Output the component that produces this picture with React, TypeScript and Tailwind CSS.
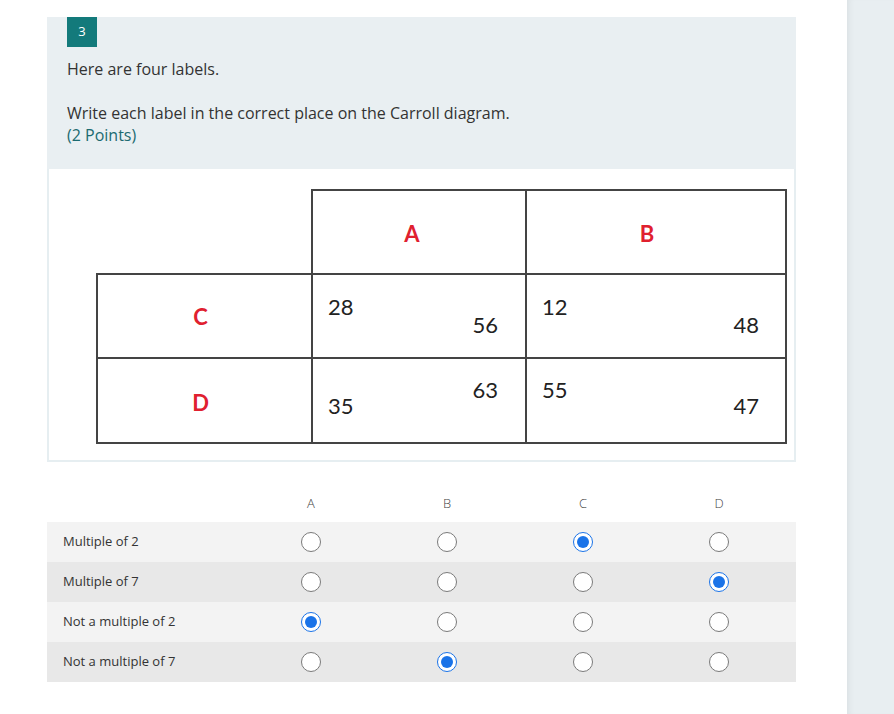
import React from "react";

const rows = [
  { label: "Multiple of 2", pick: 2 },
  { label: "Multiple of 7", pick: 3 },
  { label: "Not a multiple of 2", pick: 0 },
  { label: "Not a multiple of 7", pick: 1 },
];

const cols = ["A", "B", "C", "D"];

function Radio({ checked }: { checked: boolean }) {
  if (checked) {
    return (
      <span className="flex h-5 w-5 items-center justify-center rounded-full border border-[#1a73e8] bg-white">
        <span className="h-3 w-3 rounded-full bg-[#1a73e8]" />
      </span>
    );
  }
  return <span className="block h-5 w-5 rounded-full border border-[#7a7a7a] bg-white" />;
}

function NumCell({
  left, right, leftTop, rightTop, pr,
}: {
  left: string;
  right: string;
  leftTop: string;
  rightTop: string;
  pr: string;
}) {
  return (
    <td className="border-2 border-[#444] p-0 align-top">
      <div className={`flex h-full justify-between pl-[15px] ${pr}`}>
        <span className={leftTop}>{left}</span>
        <span className={rightTop}>{right}</span>
      </div>
    </td>
  );
}

export default function App() {
  return (
    <div
      className="flex min-h-[714px] w-full bg-white text-[#333]"
      style={{ fontFamily: "'Open Sans', 'Noto Sans', sans-serif" }}
    >
      <main className="flex-1 pt-[17px]">
        <div className="ml-[47px] w-[749px]">
          {/* Question header */}
          <div className="bg-[#e9eff2] px-5 pb-[23px]">
            <div className="flex h-[30px] w-[30px] items-center justify-center bg-[#137a7b] text-[13px] text-white">
              3
            </div>
            <div className="mt-[11px] text-[16px] leading-[22px]">
              <p>Here are four labels.</p>
              <p>&nbsp;</p>
              <p>Write each label in the correct place on the Carroll diagram.</p>
              <p className="text-[#1b6a70]">(2 Points)</p>
            </div>
          </div>

          {/* Carroll diagram picture */}
          <div className="border-x-2 border-b-2 border-[#e6eef1] bg-white pb-[16px] pl-[47px] pt-[20px]">
            <table
              className="border-collapse text-[22px] leading-none text-[#222]"
              style={{ fontFamily: "Lato, 'Liberation Sans', sans-serif" }}
            >
              <colgroup>
                <col className="w-[215px]" />
                <col className="w-[214px]" />
                <col className="w-[260px]" />
              </colgroup>
              <tbody>
                <tr className="h-[84px]">
                  <td className="p-0" />
                  <td className="border-2 border-[#444] pr-[14px] pt-[4px] text-center font-bold text-[#e0202f]">A</td>
                  <td className="border-2 border-[#444] pr-[18px] pt-[4px] text-center font-bold text-[#e0202f]">B</td>
                </tr>
                <tr className="h-[84px]">
                  <td className="border-2 border-[#444] pr-[8px] pt-[2px] text-center font-bold text-[#e0202f]">C</td>
                  <NumCell left="28" right="56" leftTop="mt-[21px]" rightTop="mt-[39px]" pr="pr-[27px]" />
                  <NumCell left="12" right="48" leftTop="mt-[21px]" rightTop="mt-[39px]" pr="pr-[26px]" />
                </tr>
                <tr className="h-[85px]">
                  <td className="border-2 border-[#444] pr-[8px] pt-[4px] text-center font-bold text-[#e0202f]">D</td>
                  <NumCell left="35" right="63" leftTop="mt-[36px]" rightTop="mt-[20px]" pr="pr-[27px]" />
                  <NumCell left="55" right="47" leftTop="mt-[20px]" rightTop="mt-[36px]" pr="pr-[26px]" />
                </tr>
              </tbody>
            </table>
          </div>

          {/* Likert grid */}
          <div className="mt-[32px] grid h-5 grid-cols-[196px_repeat(4,136px)] items-center text-[13px] font-light text-[#444]">
            <span />
            {cols.map((c) => (
              <span key={c} className="text-center">{c}</span>
            ))}
          </div>
          <div className="mt-[8px]">
            {rows.map((r, i) => (
              <div
                key={r.label}
                className={`grid h-10 grid-cols-[196px_repeat(4,136px)] items-center ${i % 2 === 0 ? "bg-[#f3f3f3]" : "bg-[#e8e8e8]"}`}
              >
                <span className="pl-4 text-[13px] text-[#333]">{r.label}</span>
                {cols.map((c, j) => (
                  <span key={c} className="flex justify-center">
                    <Radio checked={r.pick === j} />
                  </span>
                ))}
              </div>
            ))}
          </div>
        </div>
      </main>
      <aside className="w-[47px] bg-[#e8eef1] shadow-[inset_6px_0_6px_-4px_rgba(0,0,0,0.06)]" />
    </div>
  );
}
